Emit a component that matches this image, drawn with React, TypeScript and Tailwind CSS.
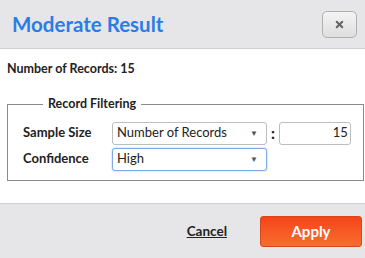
import { X } from "lucide-react";

function SelectBox({ value, focused }: { value: string; focused?: boolean }) {
  return (
    <div
      className={`flex h-[23px] w-[155px] items-center justify-between rounded-[3px] border bg-white pl-[4px] pr-[8px] text-[13px] text-[#222] ${
        focused ? "border-[#7fa8e8] shadow-[0_0_2px_#9cc0f2]" : "border-[#bdbdbd]"
      }`}
    >
      <span>{value}</span>
      <span className="text-[8px] text-[#555]">▼</span>
    </div>
  );
}

export default function App() {
  return (
    <div className="flex h-[258px] w-[365px] flex-col bg-white font-['Lato',sans-serif] text-[#222]">
      <div className="flex h-[49px] items-center justify-between border-b border-[#cfcfd1] bg-[#e6e6e8] pl-[12px] pr-[8px]">
        <h1 className="text-[20.5px] font-bold text-[#2a7de4]">Moderate Result</h1>
        <button className="flex h-[27px] w-[35px] items-center justify-center rounded-[5px] border border-[#b0b0b0] bg-gradient-to-b from-[#f4f4f4] to-[#dedede]">
          <X className="h-[11px] w-[11px] text-[#666]" strokeWidth={4.5} />
        </button>
      </div>

      <div className="flex-1 px-[7px] pt-[11px]">
        <p className="text-[12.5px] font-bold">Number of Records: 15</p>
        <fieldset className="mt-[16px] h-[86px] border border-[#8a8a8a] pl-[15px] pr-[12px]">
          <legend className="ml-[20px] px-[5px] text-[12.5px] font-bold">Record Filtering</legend>
          <div className="mt-[8px] grid grid-cols-[89px_auto_auto_auto] items-center gap-y-[3px]">
            <span className="text-[13px] font-bold">Sample Size</span>
            <SelectBox value="Number of Records" />
            <span className="px-[4px] text-[15px] font-black leading-none">:</span>
            <div className="flex h-[23px] w-[72px] items-center justify-end rounded-[3px] border border-[#bdbdbd] pr-[2px] text-[13px]">
              15
            </div>
            <span className="text-[13px] font-bold">Confidence</span>
            <SelectBox value="High" focused />
          </div>
        </fieldset>
      </div>

      <div className="flex h-[55px] items-center justify-end gap-[33px] border-t border-[#d2d2d2] bg-[#e6e6e8] pr-[3px]">
        <a className="text-[13.5px] font-bold text-[#222] underline">Cancel</a>
        <button className="h-[31px] w-[102px] rounded-[3px] border border-[#d8461c] bg-gradient-to-b from-[#f4431a] to-[#f86d2d] text-[15px] font-bold text-white">
          Apply
        </button>
      </div>
    </div>
  );
}
